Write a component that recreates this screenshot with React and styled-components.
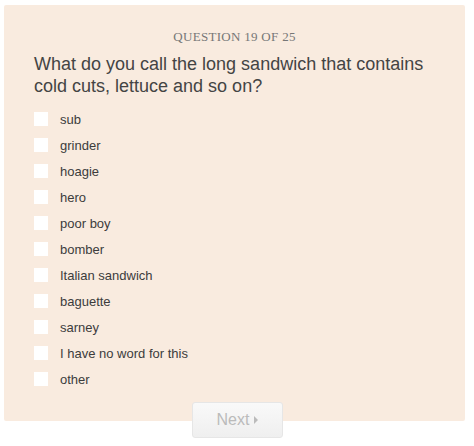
import styled, { createGlobalStyle } from 'styled-components';

const Global = createGlobalStyle`
  body {
    margin: 0;
    background: #fff;
    font-family: "Liberation Sans", Arial, sans-serif;
  }
`;

const options = [
  'sub',
  'grinder',
  'hoagie',
  'hero',
  'poor boy',
  'bomber',
  'Italian sandwich',
  'baguette',
  'sarney',
  'I have no word for this',
  'other',
];

const Page = styled.div`
  width: 474px;
  padding: 5px 0 0 4px;
  box-sizing: border-box;
  display: flex;
  flex-direction: column;
`;

const Panel = styled.div`
  width: 461px;
  height: 416px;
  box-sizing: border-box;
  background: #f9ebdf;
  border-radius: 2px;
  padding: 24px 30px 0 30px;
`;

const Counter = styled.div`
  text-align: center;
  font-family: "Liberation Serif", "Times New Roman", serif;
  font-size: 13px;
  letter-spacing: 0.3px;
  color: #777;
  line-height: 16px;
`;

const Question = styled.h2`
  margin: 8px 0 0 0;
  font-weight: normal;
  font-size: 18px;
  line-height: 22px;
  color: #444;
`;

const List = styled.ul`
  list-style: none;
  margin: 15px 0 0 0;
  padding: 0;
  display: flex;
  flex-direction: column;
  gap: 12px;
`;

const Option = styled.li`
  display: flex;
  align-items: center;
  gap: 12px;
  height: 14px;
  font-size: 13px;
  color: #3c3c3c;
`;

const Box = styled.span`
  width: 14px;
  height: 14px;
  background: #fff;
  flex: none;
`;

const NextButton = styled.button`
  align-self: flex-start;
  margin: -19px 0 0 188px;
  width: 91px;
  height: 36px;
  border: 1px solid #e6e6e6;
  border-radius: 3px;
  background: linear-gradient(#f9f9f9, #efefef);
  color: #bbb;
  font-family: "Liberation Sans", Arial, sans-serif;
  font-size: 16px;
  display: flex;
  align-items: center;
  justify-content: center;
  gap: 5px;
  padding: 0;
`;

const Arrow = styled.span`
  width: 0;
  height: 0;
  border-top: 4px solid transparent;
  border-bottom: 4px solid transparent;
  border-left: 4px solid #bbb;
`;

export default function App() {
  return (
    <Page>
      <Global />
      <Panel>
        <Counter>QUESTION 19 OF 25</Counter>
        <Question>
          What do you call the long sandwich that contains cold cuts, lettuce and so on?
        </Question>
        <List>
          {options.map((o) => (
            <Option key={o}>
              <Box />
              {o}
            </Option>
          ))}
        </List>
      </Panel>
      <NextButton>
        Next <Arrow />
      </NextButton>
    </Page>
  );
}
